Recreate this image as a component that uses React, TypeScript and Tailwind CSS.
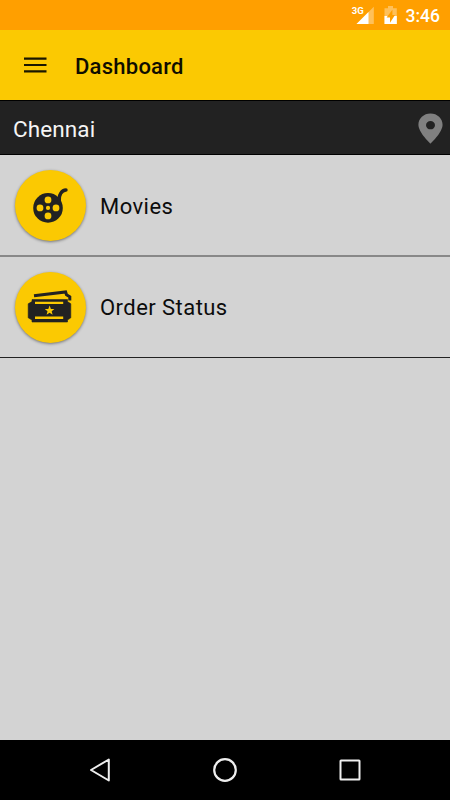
import React from 'react';

function StatusIcons() {
  return (
    <svg width="54" height="30" viewBox="0 0 54 30">
      {/* Signal */}
      <path d="M6.5 24L23.8 6.7V24Z" fill="#fff" fillOpacity="0.35" />
      <path d="M6.5 24L18.5 12V24Z" fill="#fff" />
      <text x="1.8" y="13.8" fontSize="9.5" fontWeight="700" fill="#fff" fontFamily="Roboto, sans-serif">3G</text>
      {/* Battery */}
      <path d="M34.5 8.2H38V6H43V8.2H46.8V24H34.5Z" fill="#fff" fillOpacity="0.35" />
      <path d="M34.5 16H46.8V24H34.5Z" fill="#fff" />
      <path d="M42.4 9.8L36.6 17.6H40V22.8L45 15H42.4Z" fill="#ff9f00" />
    </svg>
  );
}

function ReelIcon() {
  return (
    <svg width="71" height="71" viewBox="0 0 71 71">
      <circle cx="33" cy="37.9" r="14.8" fill="#222" />
      <path d="M44.2 31.5C43.4 25 46.8 20 51 20" fill="none" stroke="#222" strokeWidth="3.4" strokeLinecap="round" />
      <g fill="#fbc902">
        <circle cx="33" cy="29.9" r="3.4" />
        <circle cx="33" cy="45.9" r="3.4" />
        <circle cx="25" cy="37.9" r="3.4" />
        <circle cx="41" cy="37.9" r="3.4" />
        <circle cx="33" cy="37.9" r="2.1" />
      </g>
    </svg>
  );
}

function TicketIcon() {
  return (
    <svg width="71" height="71" viewBox="0 0 71 71">
      <path d="M19 23.8L50.6 20L51.5 22.8L54.8 24.8V28.6" fill="none" stroke="#222" strokeWidth="3" />
      <path d="M17 27.6H52.5V29.6L55.8 31.8V45.8L52.5 48V50H17V48L13.2 45.8V31.8L17 29.6Z" fill="#222" stroke="#222" strokeWidth="0.6" />
      <path d="M20 29.8H48.2V32H20ZM20 44.6H48.2V46.9H20Z" fill="#fbc902" />
      <path d="M34.6 33.6L35.9 36.9L39.4 37.1L36.7 39.3L37.6 42.8L34.6 40.8L31.6 42.8L32.5 39.3L29.8 37.1L33.3 36.9Z" fill="#fbc902" />
    </svg>
  );
}

function MenuRow({ label, icon, border }: { label: string; icon: React.ReactNode; border: string }) {
  return (
    <div className={`flex items-center pl-[15px] ${border}`}>
      <div className="w-[71px] h-[71px] rounded-full bg-[#fbc902] shadow-[0_1px_3px_rgba(0,0,0,0.45)]">{icon}</div>
      <span className="ml-3.5 mt-0.5 text-[22px] leading-7 tracking-[0.45px] text-[#0c0c0c]">{label}</span>
    </div>
  );
}

export default function App() {
  return (
    <div className="w-[450px] h-[800px] flex flex-col overflow-hidden bg-[#d3d3d3] font-['Roboto',sans-serif]">
      <div className="h-[30px] flex items-center justify-end bg-[#ff9f00] pr-2.5">
        <StatusIcons />
        <span className="ml-0.5 mt-0.5 text-[17.5px] leading-5 font-medium text-white">3:46</span>
      </div>

      <header className="h-[70px] flex items-center bg-[#fbc902] pl-6">
        <svg width="23" height="16" viewBox="0 0 23 16" fill="#1a1700">
          <path d="M0 0.5H22.5V2.7H0ZM0 6.9H22.5V9.1H0ZM0 13.2H22.5V15.4H0Z" />
        </svg>
        <h1 className="ml-7 mt-1 text-[22px] leading-7 font-medium tracking-[0.25px] text-[#0f0d00]">Dashboard</h1>
      </header>

      <div className="h-[55px] flex items-center justify-between bg-[#222] border-y border-black pl-[13px] pr-[7px]">
        <span className="mt-0.5 text-[22.5px] leading-7 tracking-[0.1px] text-[#f5f5f5]">Chennai</span>
        <svg width="25" height="31" viewBox="0 0 24 32" preserveAspectRatio="none" className="mt-px">
          <path
            fillRule="evenodd"
            fill="#808080"
            d="M12 0.5C5.5 0.5 0.4 5.6 0.4 12C0.4 20 12 31.5 12 31.5S23.6 20 23.6 12C23.6 5.6 18.5 0.5 12 0.5ZM12 8.3A4.3 4.3 0 1 1 12 16.9A4.3 4.3 0 1 1 12 8.3Z"
          />
        </svg>
      </div>

      <main className="flex-1">
        <MenuRow label="Movies" icon={<ReelIcon />} border="h-[102px] pt-px border-b-2 border-[#888]" />
        <MenuRow label="Order Status" icon={<TicketIcon />} border="h-[101px] border-b border-[#222]" />
      </main>

      <nav className="h-[60px] flex items-center justify-between bg-black px-[88px]">
        <svg width="24" height="26" viewBox="0 0 24 26" fill="none" stroke="#eee" strokeWidth="2">
          <path d="M20.8 2.5V23.5L3 13Z" strokeLinejoin="round" />
        </svg>
        <svg width="26" height="26" viewBox="0 0 26 26" fill="none" stroke="#eee" strokeWidth="2.2">
          <circle cx="13" cy="13" r="10.8" />
        </svg>
        <svg width="24" height="24" viewBox="0 0 24 24" fill="none" stroke="#eee" strokeWidth="2">
          <rect x="2.5" y="2.5" width="19" height="19" rx="0.5" />
        </svg>
      </nav>
    </div>
  );
}
